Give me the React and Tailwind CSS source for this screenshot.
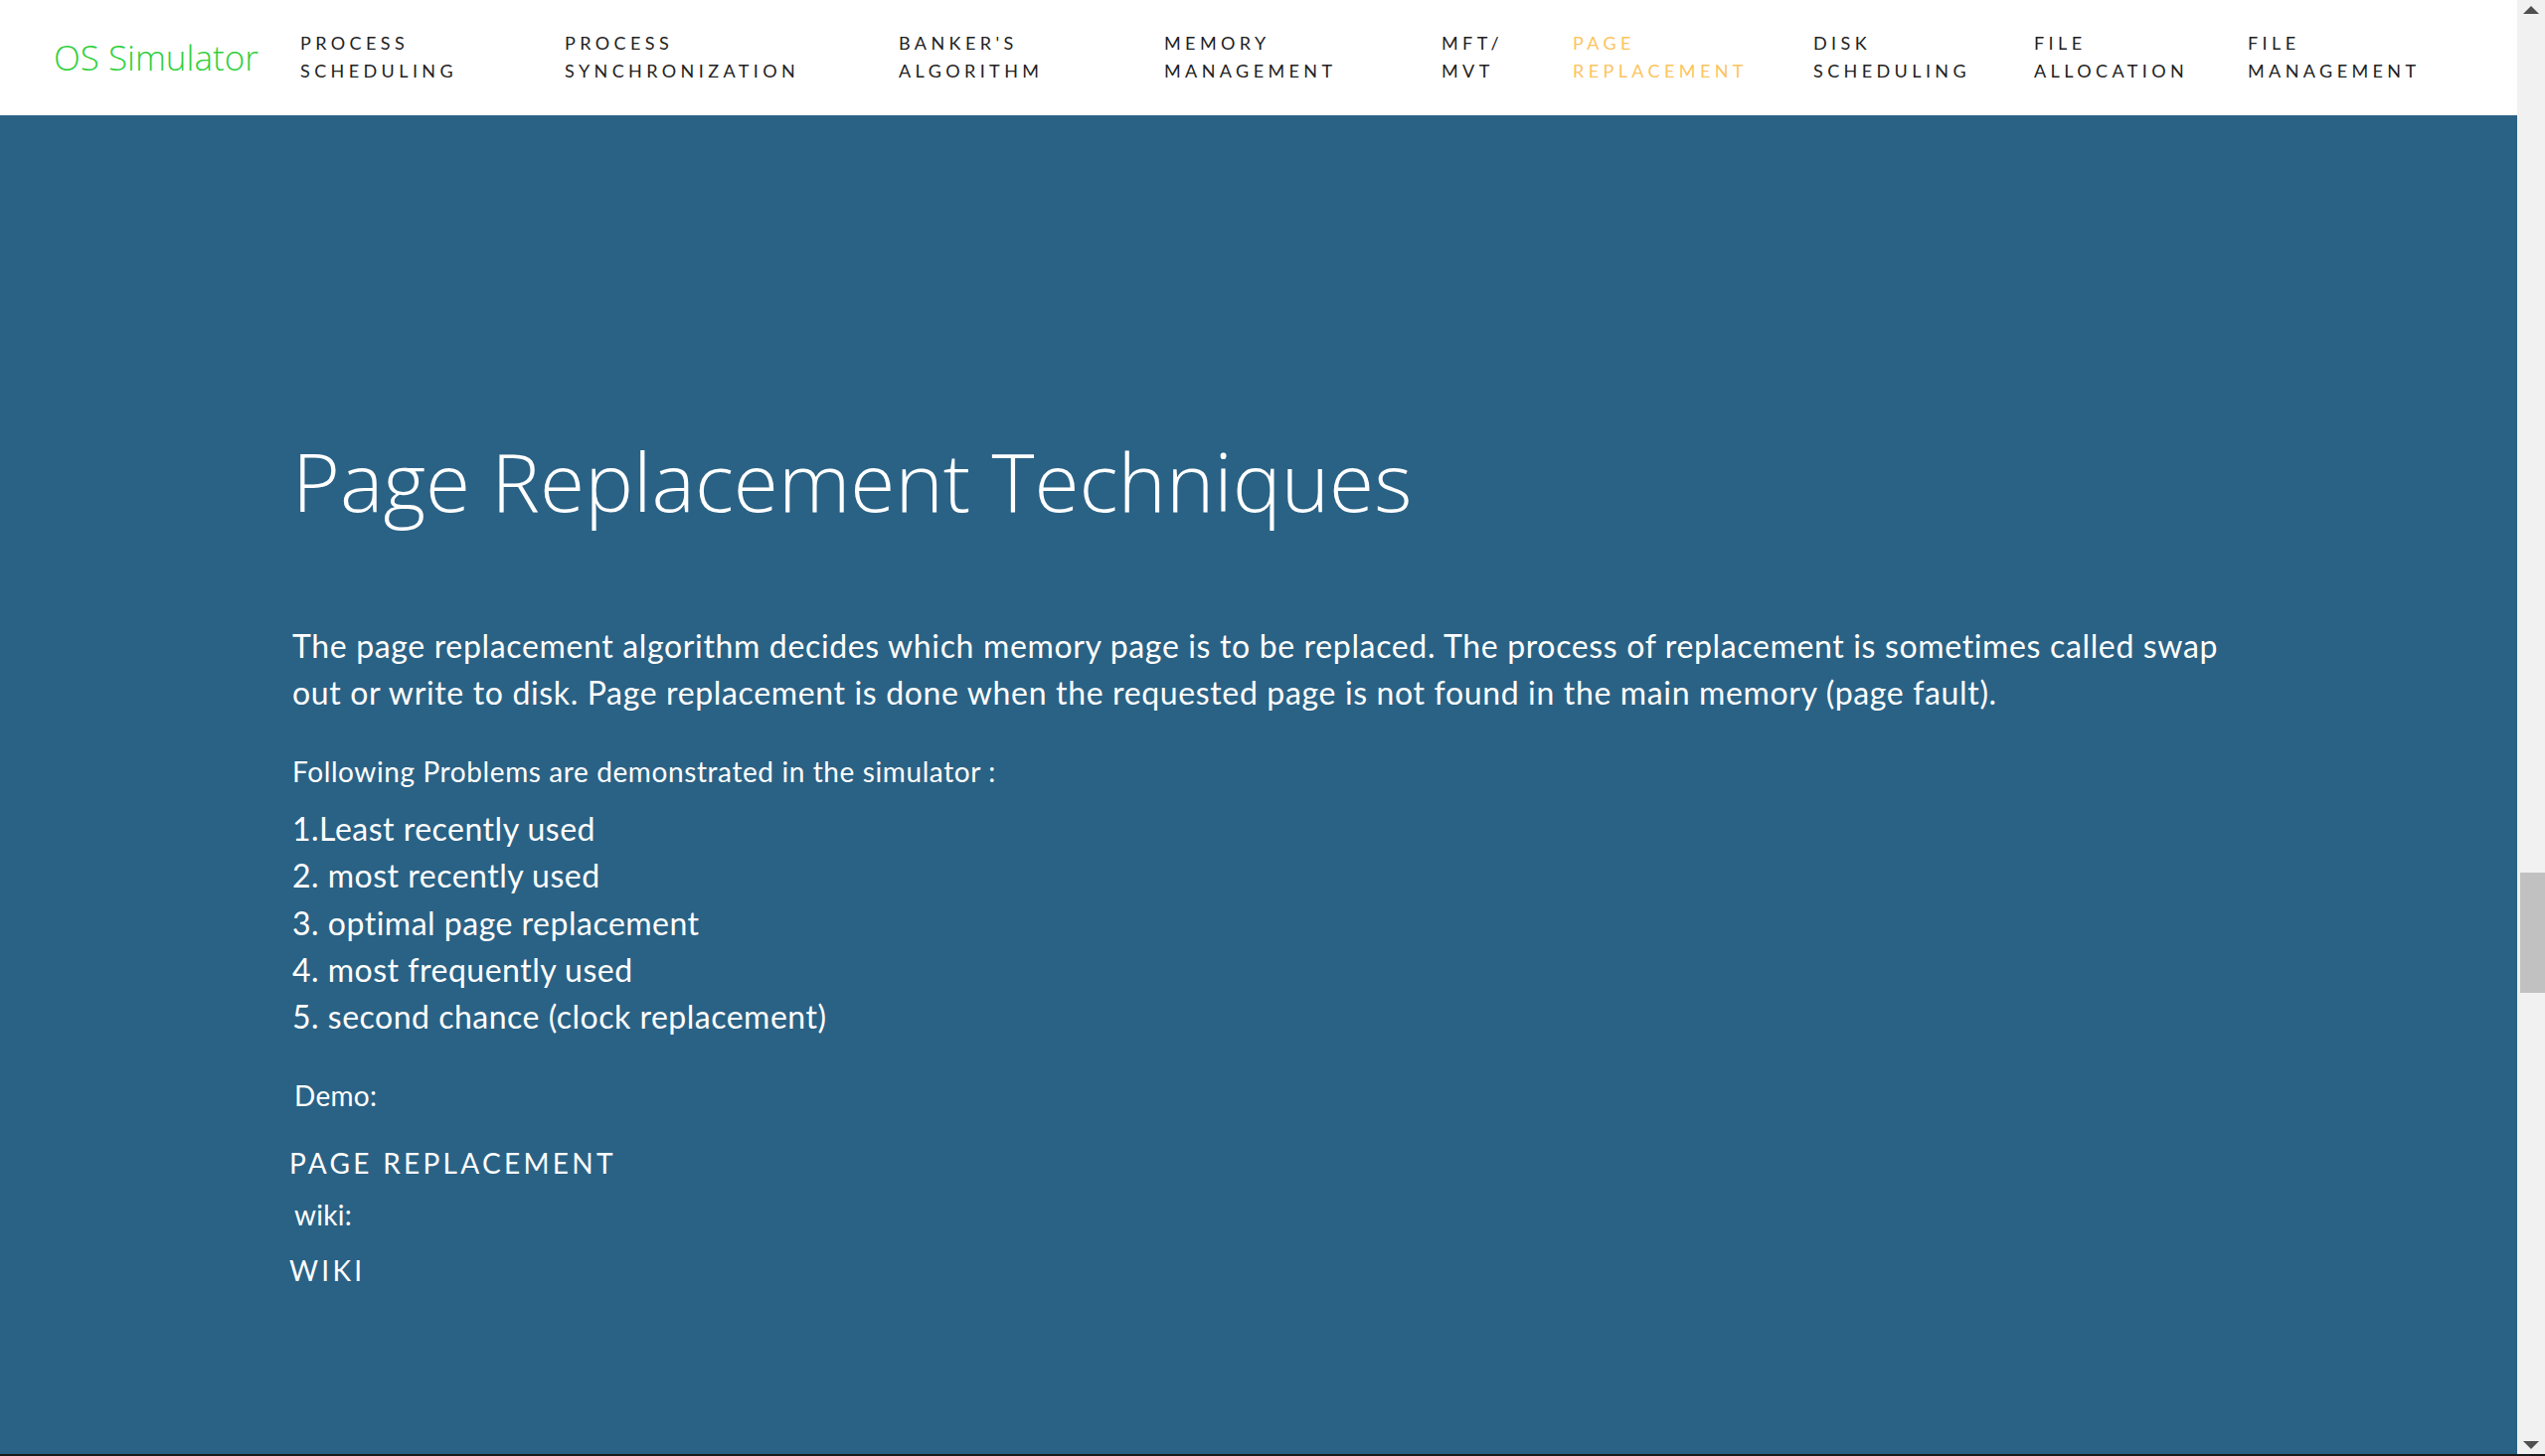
import React from 'react';

const navItems = [
  { top: 'PROCESS', bottom: 'SCHEDULING', w: 'w-[266px]' },
  { top: 'PROCESS', bottom: 'SYNCHRONIZATION', w: 'w-[336px]' },
  { top: "BANKER'S", bottom: 'ALGORITHM', w: 'w-[267px]' },
  { top: 'MEMORY', bottom: 'MANAGEMENT', w: 'w-[279px]' },
  { top: 'MFT/', bottom: 'MVT', w: 'w-[132px]' },
  { top: 'PAGE', bottom: 'REPLACEMENT', w: 'w-[242px]', active: true },
  { top: 'DISK', bottom: 'SCHEDULING', w: 'w-[222px]' },
  { top: 'FILE', bottom: 'ALLOCATION', w: 'w-[215px]' },
  { top: 'FILE', bottom: 'MANAGEMENT', w: 'w-[210px]' },
];

const problems = [
  '1.Least recently used',
  '2. most recently used',
  '3. optimal page replacement',
  '4. most frequently used',
  '5. second chance (clock replacement)',
];

function Navbar() {
  return (
    <nav className="h-[116px] bg-white flex items-center pl-[54px] shrink-0">
      {/* Brand */}
      <a href="#" className="w-[248px] text-[35px] font-light text-[#2fcf3c] font-['Open_Sans',sans-serif] leading-none -mt-[2px]">
        OS Simulator
      </a>

      {/* Links */}
      <ul className="flex items-center font-['Lato',sans-serif] text-[18px] leading-[28px] tracking-[4.4px] -mt-[2px]">
        {navItems.map((item, i) => (
          <li key={i} className={item.w}>
            <a href="#" className={`block ${item.active ? 'text-[#fdc45e]' : 'text-[#222]'}`}>
              <span className="block">{item.top}</span>
              <span className="block">{item.bottom}</span>
            </a>
          </li>
        ))}
      </ul>
    </nav>
  );
}

function Scrollbar() {
  return (
    <div className="w-[28px] bg-[#f1f1f1] flex flex-col items-center shrink-0">
      <div className="h-[28px] flex items-start justify-center pt-[6px]">
        <div className="w-0 h-0 border-l-[8px] border-r-[8px] border-b-[8px] border-l-transparent border-r-transparent border-b-[#505050]" />
      </div>
      <div className="mt-[850px] h-[121px] w-[25px] ml-[3px] bg-[#c1c1c1]" />
      <div className="flex-1" />
      <div className="h-[28px] flex items-end justify-center pb-[5px]">
        <div className="w-0 h-0 border-l-[8px] border-r-[8px] border-t-[8px] border-l-transparent border-r-transparent border-t-[#505050]" />
      </div>
    </div>
  );
}

export default function App() {
  return (
    <div className="h-[1465px] w-full flex flex-col overflow-hidden">
      <div className="flex flex-1 min-h-0">
        <div className="flex-1 flex flex-col min-w-0">
          <Navbar />

          <main className="flex-1 bg-[#2a6285] text-white pl-[294px]">
            <h1 className="mt-[326px] text-[82px] font-light leading-none font-['Open_Sans',sans-serif]">
              Page Replacement Techniques
            </h1>

            <p className="mt-[102px] w-[1960px] text-[32px] leading-[47px] tracking-[0.65px] font-['Lato',sans-serif]">
              The page replacement algorithm decides which memory page is to be replaced. The process of replacement is sometimes called swap out or write to disk. Page replacement is done when the requested page is not found in the main memory (page fault).
            </p>

            <p className="mt-[37px] text-[28px] leading-[39px] tracking-[0.6px] font-['Lato',sans-serif]">
              Following Problems are demonstrated in the simulator :
            </p>

            <ul className="mt-[14px] text-[32px] leading-[47.3px] tracking-[0.5px] font-['Lato',sans-serif]">
              {problems.map((p) => (
                <li key={p}>{p}</li>
              ))}
            </ul>

            <p className="mt-[37px] ml-[2px] text-[28px] leading-[39px] tracking-[0.3px] font-['Lato',sans-serif]">Demo:</p>
            <a href="#" className="block mt-[28px] -ml-[3px] text-[28px] leading-[40.5px] tracking-[3.3px] font-['Lato',sans-serif]">
              PAGE REPLACEMENT
            </a>
            <p className="mt-[12px] ml-[2px] text-[28px] leading-[39px] tracking-[0.3px] font-['Lato',sans-serif]">wiki:</p>
            <a href="#" className="block mt-[16px] -ml-[3px] text-[28px] leading-[40.5px] tracking-[3.3px] font-['Lato',sans-serif]">
              WIKI
            </a>
          </main>
        </div>
        <Scrollbar />
      </div>
      <div className="h-[2px] bg-[#1a1a1a] shrink-0" />
    </div>
  );
}
